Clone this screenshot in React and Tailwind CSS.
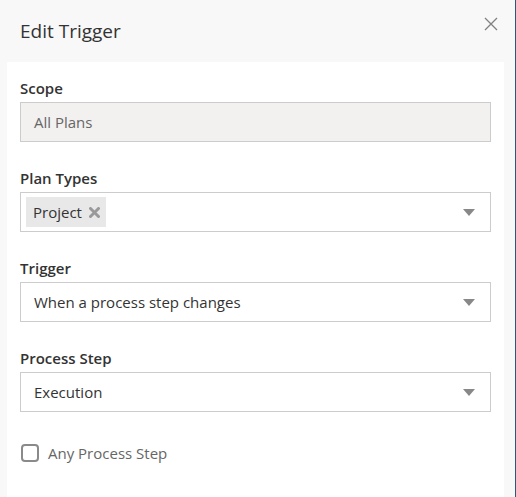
function Caret() {
  return (
    <svg width="12" height="7" viewBox="0 0 12 7" className="shrink-0">
      <path d="M0 0 L12 0 L6 7 Z" fill="#888888" />
    </svg>
  );
}

function Field({ label, children }) {
  return (
    <div className="flex flex-col">
      <div className="text-[15px] leading-5 font-semibold text-[#333] mb-1">{label}</div>
      {children}
    </div>
  );
}

function Select({ children }) {
  return (
    <div className="h-10 border border-[#cccccc] bg-white flex items-center justify-between pl-[13px] pr-[15px]">
      <div className="flex items-center text-[15px] text-[#333]">{children}</div>
      <Caret />
    </div>
  );
}

export default function App() {
  return (
    <div
      className="w-[516px] h-[497px] bg-[#f8f8f8] border-r border-[#2f5878] flex flex-col overflow-hidden"
      style={{ fontFamily: '"Open Sans", "Noto Sans", sans-serif' }}
    >
      <div className="h-[62px] flex items-center justify-between pl-[20px] pr-[17px] shrink-0">
        <h1 className="text-[19px] text-[#333] font-normal">Edit Trigger</h1>
        <svg width="14" height="14" viewBox="0 0 14 14" className="self-start mt-[17px]">
          <path d="M1 1 L13 13 M13 1 L1 13" stroke="#808080" strokeWidth="1.3" />
        </svg>
      </div>
      <div className="ml-[7px] w-[497px] flex-1 bg-white px-[13px] pt-4 flex flex-col gap-[26px]">
        <Field label="Scope">
          <div className="h-10 border border-[#cccccc] bg-[#f2f1f0] flex items-center pl-[13px] text-[15px] text-[#666]">
            All Plans
          </div>
        </Field>
        <Field label="Plan Types">
          <div className="h-10 border border-[#cccccc] bg-white flex items-center justify-between pl-[5px] pr-[15px]">
            <span className="h-[30px] bg-[#e8e8e8] flex items-center pl-[7px] pr-[6px] text-[15px] text-[#333] gap-[7px]">
              Project
              <svg width="11" height="11" viewBox="0 0 11 11">
                <path d="M1.5 1.5 L9.5 9.5 M9.5 1.5 L1.5 9.5" stroke="#999" strokeWidth="3" strokeLinecap="round" />
              </svg>
            </span>
            <Caret />
          </div>
        </Field>
        <Field label="Trigger">
          <Select>When a process step changes</Select>
        </Field>
        <Field label="Process Step">
          <Select>Execution</Select>
        </Field>
        <label className="flex items-center gap-[9px] mt-1 pl-[1px]">
          <span className="w-[18px] h-[18px] border-2 border-[#8a8a8a] rounded-[4px] bg-white" />
          <span className="text-[15px] text-[#666]">Any Process Step</span>
        </label>
      </div>
    </div>
  );
}
